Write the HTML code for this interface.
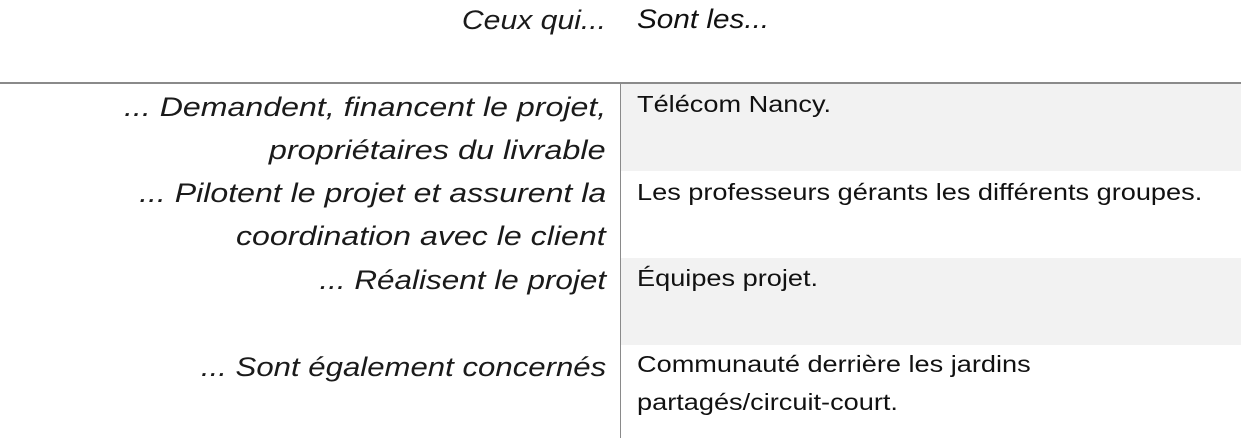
<!DOCTYPE html>
<html><head><meta charset="utf-8"><style>
body{margin:0;width:1243px;height:438px;background:#fff;position:relative;overflow:hidden;font-family:"Liberation Sans",sans-serif;color:#111}
.l{position:absolute;right:637px;font-style:italic;font-size:27px;white-space:nowrap;color:#1a1a1a;line-height:43px;transform:scaleX(1.19);transform-origin:right center}
.r{position:absolute;left:637px;font-size:23px;white-space:nowrap;line-height:38px;transform:scaleX(1.18);transform-origin:left center}
.sh{position:absolute;left:621px;width:620px;height:87px;background:#f2f2f2}
</style></head><body>
<div style="position:absolute;left:0;top:82px;width:1241px;height:2px;background:#8a8a8a"></div>
<div style="position:absolute;left:620px;top:83px;width:1px;height:355px;background:#8a8a8a"></div>
<div class="sh" style="top:84px"></div>
<div class="sh" style="top:258px"></div>
<div class="l" style="top:-1px;transform:scaleX(1.117)">Ceux qui...</div>
<div class="r" style="top:0px;font-style:italic;font-size:27px;transform:scaleX(1.1)">Sont les...</div>
<div class="l" style="top:86px">... Demandent, financent le projet,</div>
<div class="l" style="top:129px;transform:scaleX(1.2)">propriétaires du livrable</div>
<div class="l" style="top:172px;transform:scaleX(1.188)">... Pilotent le projet et assurent la</div>
<div class="l" style="top:215px">coordination avec le client</div>
<div class="l" style="top:259px;transform:scaleX(1.165)">... Réalisent le projet</div>
<div class="l" style="top:346px;transform:scaleX(1.154)">... Sont également concernés</div>
<div class="r" style="top:85px">Télécom Nancy.</div>
<div class="r" style="top:173px">Les professeurs gérants les différents groupes.</div>
<div class="r" style="top:259px">Équipes projet.</div>
<div class="r" style="top:345px">Communauté derrière les jardins</div>
<div class="r" style="top:383px">partagés/circuit-court.</div>
</body></html>
